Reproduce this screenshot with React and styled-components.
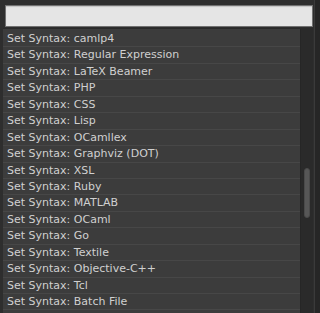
import React from 'react';
import styled, { createGlobalStyle } from 'styled-components';

const items = [
  'camlp4',
  'Regular Expression',
  'LaTeX Beamer',
  'PHP',
  'CSS',
  'Lisp',
  'OCamllex',
  'Graphviz (DOT)',
  'XSL',
  'Ruby',
  'MATLAB',
  'OCaml',
  'Go',
  'Textile',
  'Objective-C++',
  'Tcl',
  'Batch File',
];

const GlobalStyle = createGlobalStyle`
  html, body {
    margin: 0;
    padding: 0;
    background: #2b2b2b;
    overflow: hidden;
  }
`;

const Window = styled.div`
  width: 320px;
  height: 313px;
  display: flex;
  background: #2b2b2b;
  overflow: hidden;
`;

const Panel = styled.div`
  width: 315px;
  display: flex;
  flex-direction: column;
  background: #2e2e2e;
  border-right: 1px solid #3a3a3a;
  padding: 5px 0 0 3px;
  box-sizing: border-box;
`;

const Edge = styled.div`
  flex: 1;
  background: #262626;
`;

const SearchInput = styled.input`
  box-sizing: border-box;
  width: 308px;
  height: 22px;
  margin-left: 2px;
  background: #e5e5e5;
  border: 1px solid #707070;
  box-shadow: inset 0 1px 1px rgba(0, 0, 0, 0.15);
  outline: none;
  padding: 0 4px;
  font: 12px "DejaVu Sans", sans-serif;
`;

const ListBox = styled.div`
  margin-top: 1px;
  width: 310px;
  flex: 1;
  display: flex;
  border-top: 1px solid #2a2a2a;
  background: #3c3c3c;
  overflow: hidden;
`;

const Rows = styled.div`
  flex: 1;
  display: flex;
  flex-direction: column;
  padding-top: 2px;
`;

const Row = styled.div`
  flex: none;
  height: 16.45px;
  box-sizing: border-box;
  padding-left: 4px;
  border-bottom: 1px solid #474747;
  color: #d0d0d0;
  font: 11px "DejaVu Sans", sans-serif;
  line-height: 15.45px;
  white-space: nowrap;
`;

const Track = styled.div`
  width: 13px;
  background: #2a2a2a;
  border-left: 1px solid #262626;
  box-sizing: border-box;
  display: flex;
  flex-direction: column;
  align-items: center;
  padding-top: 139px;
`;

const Thumb = styled.div`
  width: 6px;
  height: 50px;
  border-radius: 3px;
  background: #575757;
  border: 1px solid #4a4a4a;
  box-sizing: border-box;
`;

export default function App() {
  return (
    <Window>
      <GlobalStyle />
      <Panel>
        <SearchInput type="text" defaultValue="" />
        <ListBox>
          <Rows>
            {items.map((name) => (
              <Row key={name}>Set Syntax: {name}</Row>
            ))}
          </Rows>
          <Track>
            <Thumb />
          </Track>
        </ListBox>
      </Panel>
      <Edge />
    </Window>
  );
}
